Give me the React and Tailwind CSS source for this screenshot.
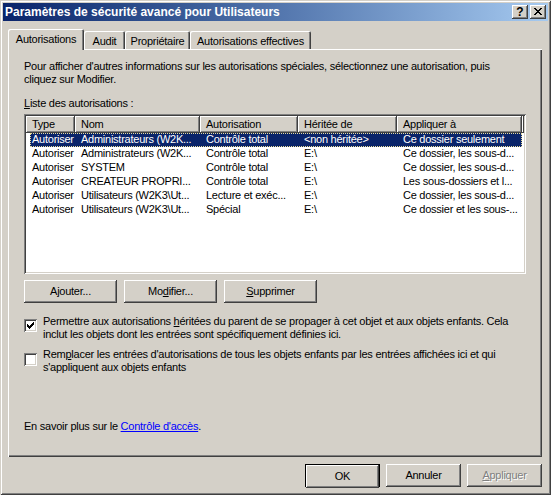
import React from "react";

const RAISED =
  "shadow-[inset_-1px_-1px_0_#404040,inset_1px_1px_0_#ffffff,inset_-2px_-2px_0_#808080,inset_2px_2px_0_#d4d0c8]";
const SUNKEN =
  "shadow-[inset_1px_1px_0_#808080,inset_-1px_-1px_0_#ffffff,inset_2px_2px_0_#404040,inset_-2px_-2px_0_#d4d0c8]";
const TAB =
  "shadow-[inset_1px_1px_0_#ffffff,inset_-1px_0_0_#404040,inset_-2px_0_0_#808080] rounded-tl-[2px] rounded-tr-[2px] bg-[#d4d0c8] pt-[4px] text-center whitespace-nowrap";

function Px({ rects, w, h }) {
  return (
    <svg width={w} height={h} viewBox={`0 0 ${w} ${h}`} shapeRendering="crispEdges">
      {rects.map(([x, y, rw], i) => (
        <rect key={i} x={x} y={y} width={rw} height={1} fill="#000" />
      ))}
    </svg>
  );
}

const CLOSE = [
  [0, 0, 2], [6, 0, 2],
  [1, 1, 2], [5, 1, 2],
  [2, 2, 4],
  [3, 3, 2],
  [2, 4, 4],
  [1, 5, 2], [5, 5, 2],
  [0, 6, 2], [6, 6, 2],
];

const CHECK = [
  [6, 0, 1],
  [5, 1, 2],
  [0, 2, 1], [4, 2, 3],
  [0, 3, 2], [3, 3, 3],
  [0, 4, 5],
  [1, 5, 3],
  [2, 6, 1],
];

function Checkbox({ checked }) {
  return (
    <div className={`w-[13px] h-[13px] shrink-0 p-[2px] ${SUNKEN}`}>
      <div className="w-[9px] h-[9px] bg-white pl-[1px] pt-[1px]">
        {checked && <Px rects={CHECK} w={7} h={7} />}
      </div>
    </div>
  );
}

function Btn({ children, className = "" }) {
  return (
    <div
      className={`h-[23px] flex items-center justify-center bg-[#d4d0c8] ${RAISED} ${className}`}
    >
      {children}
    </div>
  );
}

const COLS = [
  { label: "Type", w: "w-[49px]" },
  { label: "Nom", w: "w-[125px]" },
  { label: "Autorisation", w: "w-[98px]" },
  { label: "Héritée de", w: "w-[99px]" },
  { label: "Appliquer à", w: "w-[125px]" },
];

const ROWS = [
  ["Autoriser", "Administrateurs (W2K...", "Contrôle total", "<non héritée>", "Ce dossier seulement"],
  ["Autoriser", "Administrateurs (W2K...", "Contrôle total", "E:\\", "Ce dossier, les sous-d..."],
  ["Autoriser", "SYSTEM", "Contrôle total", "E:\\", "Ce dossier, les sous-d..."],
  ["Autoriser", "CREATEUR PROPRI...", "Contrôle total", "E:\\", "Les sous-dossiers et l..."],
  ["Autoriser", "Utilisateurs (W2K3\\Ut...", "Lecture et exéc...", "E:\\", "Ce dossier, les sous-d..."],
  ["Autoriser", "Utilisateurs (W2K3\\Ut...", "Spécial", "E:\\", "Ce dossier et les sous-..."],
];

const CELLW = ["w-[45px] pl-[2px]", "w-[125px] pl-[6px]", "w-[98px] pl-[6px]", "w-[99px] pl-[6px]", "w-[125px] pl-[6px]"];

export default function App() {
  return (
    <div className="w-[551px] h-[495px] bg-[#d4d0c8] p-[3px] flex flex-col font-['Liberation_Sans',Arial,sans-serif] text-[11px] leading-[13px] tracking-[-0.25px] text-black select-none shadow-[inset_1px_1px_0_#d4d0c8,inset_-1px_-1px_0_#404040,inset_2px_2px_0_#ffffff,inset_-2px_-2px_0_#808080]">
      {/* Title bar */}
      <div className="h-[18px] shrink-0 flex items-center bg-linear-to-r from-[#0a246a] to-[#a6caf0] pl-[2px] pr-[2px]">
        <span className="flex-1 text-white font-bold text-[12px] tracking-normal whitespace-nowrap">
          Paramètres de sécurité avancé pour Utilisateurs
        </span>
        <div className="flex gap-[2px]">
          <div className={`w-[16px] h-[14px] bg-[#d4d0c8] flex items-center justify-center font-bold text-[12px] leading-[12px] tracking-normal ${RAISED}`}>
            ?
          </div>
          <div className={`w-[16px] h-[14px] bg-[#d4d0c8] flex items-center justify-center pb-[1px] ${RAISED}`}>
            <Px rects={CLOSE} w={8} h={7} />
          </div>
        </div>
      </div>

      {/* Body */}
      <div className="flex-1 flex flex-col mt-[8px] pl-[5px] pr-[6px]">
        {/* Tabs */}
        <div className="h-[20px] shrink-0 flex items-end">
          <div className={`relative z-10 -mb-px w-[76px] h-[21px] ${TAB}`}>Autorisations</div>
          <div className={`w-[41px] h-[18px] ${TAB}`}>Audit</div>
          <div className={`w-[65px] h-[18px] ${TAB}`}>Propriétaire</div>
          <div className={`w-[121px] h-[18px] ${TAB}`}>Autorisations effectives</div>
        </div>

        {/* Panel */}
        <div className="h-[408px] shrink-0 flex flex-col pl-[16px] pr-[16px] pt-[11px] shadow-[inset_1px_1px_0_#ffffff,inset_-1px_-1px_0_#404040,inset_-2px_-2px_0_#808080]">
          <p className="whitespace-nowrap">
            Pour afficher d'autres informations sur les autorisations spéciales, sélectionnez une autorisation, puis
            <br />
            cliquez sur Modifier.
          </p>
          <p className="mt-[11px]">
            <span className="underline">L</span>iste des autorisations :
          </p>

          {/* List view */}
          <div className={`mt-[4px] w-[502px] h-[160px] p-[2px] ${SUNKEN}`}>
            <div className="w-full h-full bg-white flex flex-col overflow-hidden">
              <div className="h-[17px] shrink-0 flex bg-[#d4d0c8]">
                {COLS.map((c) => (
                  <div
                    key={c.label}
                    className={`${c.w} h-[17px] pl-[6px] pt-[2px] whitespace-nowrap overflow-hidden shadow-[inset_-1px_-1px_0_#404040,inset_1px_1px_0_#ffffff,inset_-2px_-2px_0_#808080]`}
                  >
                    {c.label}
                  </div>
                ))}
                <div className="flex-1 h-[17px] shadow-[inset_-1px_-1px_0_#404040,inset_1px_1px_0_#ffffff,inset_-2px_-2px_0_#808080]" />
              </div>
              {ROWS.map((r, i) => (
                <div key={i} className="h-[14px] shrink-0 flex pl-[4px]">
                  <div
                    className={
                      i === 0
                        ? "flex w-[492px] bg-[#0a246a] text-white outline-1 outline-dotted outline-[#e8dc9a] -outline-offset-1"
                        : "flex w-[492px]"
                    }
                  >
                    {r.map((t, j) => (
                      <div key={j} className={`${CELLW[j]} whitespace-nowrap overflow-hidden`}>
                        {t}
                      </div>
                    ))}
                  </div>
                </div>
              ))}
            </div>
          </div>

          {/* Buttons */}
          <div className="mt-[6px] flex gap-[7px]">
            <Btn className="w-[93px]">
              <span>
                A<span className="underline">j</span>outer...
              </span>
            </Btn>
            <Btn className="w-[93px]">
              <span>
                Mo<span className="underline">d</span>ifier...
              </span>
            </Btn>
            <Btn className="w-[93px]">
              <span>
                <span className="underline">S</span>upprimer
              </span>
            </Btn>
          </div>

          {/* Checkboxes */}
          <div className="mt-[12px] flex gap-[6px]">
            <div className="pt-[4px]">
              <Checkbox checked />
            </div>
            <p className="whitespace-nowrap">
              Permettre aux autorisations <span className="underline">h</span>éritées du parent de se propager à cet objet et aux objets enfants. Cela
              <br />
              inclut les objets dont les entrées sont spécifiquement définies ici.
            </p>
          </div>
          <div className="mt-[7px] flex gap-[6px]">
            <div className="pt-[5px]">
              <Checkbox />
            </div>
            <p className="whitespace-nowrap">
              Rem<span className="underline">p</span>lacer les entrées d'autorisations de tous les objets enfants par les entrées affichées ici et qui
              <br />
              s'appliquent aux objets enfants
            </p>
          </div>

          <p className="mt-[46px]">
            En savoir plus sur le{" "}
            <span className="text-[#0000ff] underline">Contrôle d'accès</span>.
          </p>
        </div>

        {/* Bottom buttons */}
        <div className="mt-[7px] flex justify-end gap-[6px]">
          <div className="w-[75px] h-[23px] border border-black">
            <Btn className="w-full h-[21px]">OK</Btn>
          </div>
          <Btn className="w-[75px]">Annuler</Btn>
          <Btn className="w-[75px] text-[#808080] [text-shadow:1px_1px_0_#ffffff]">
            <span>
              <span className="underline">A</span>ppliquer
            </span>
          </Btn>
        </div>
      </div>
    </div>
  );
}
